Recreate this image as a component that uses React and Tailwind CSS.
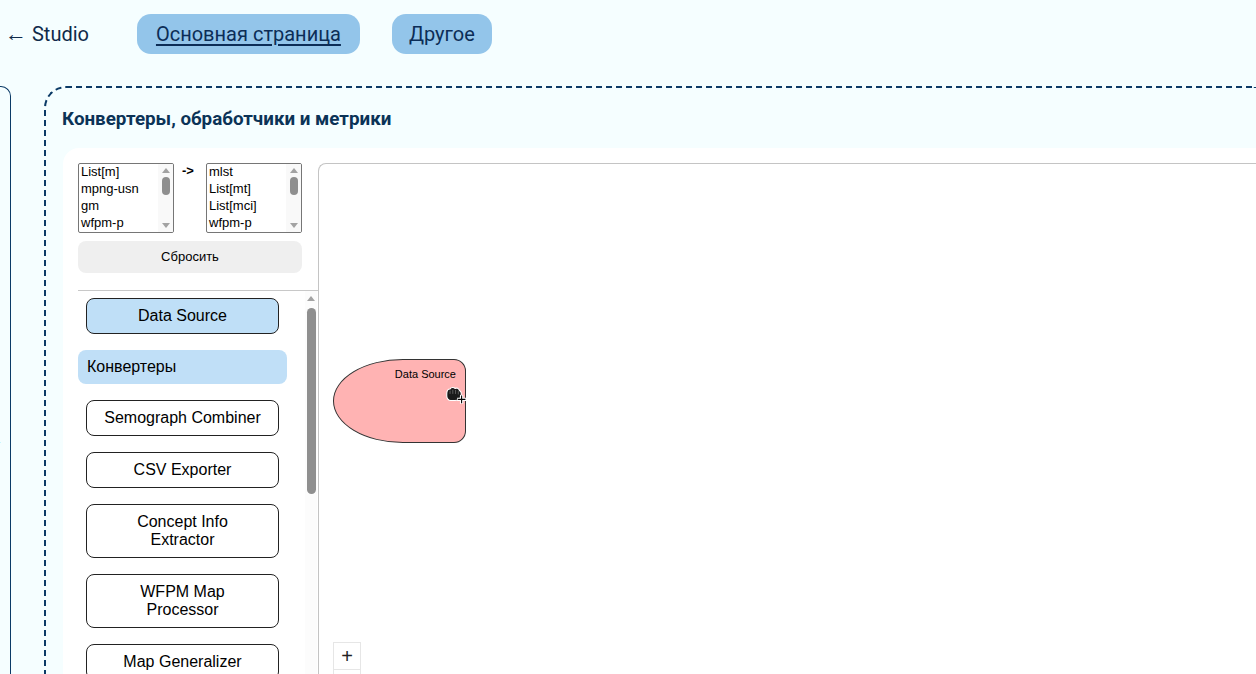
import React from 'react';

const leftItems = ['List[m]', 'mpng-usn', 'gm', 'wfpm-p'];
const rightItems = ['mlst', 'List[mt]', 'List[mci]', 'wfpm-p'];

const blocks = [
  { label: 'Semograph Combiner' },
  { label: 'CSV Exporter' },
  { label: 'Concept Info Extractor', lines: ['Concept Info', 'Extractor'] },
  { label: 'WFPM Map Processor', lines: ['WFPM Map', 'Processor'] },
  { label: 'Map Generalizer' },
];

const ListBox = ({ items }) => (
  <div className="relative w-[96px] h-[70px] border border-[#767676] rounded-[2px] bg-white overflow-hidden flex">
    <div className="flex-1 pl-[2px] -mt-[1px] text-[13px] leading-[17px] text-black">
      {items.map((it) => (
        <div key={it}>{it}</div>
      ))}
    </div>
    <div className="w-[15px] h-full bg-[#f9f9f9] flex flex-col items-center justify-between py-[4px]">
      <div className="w-0 h-0 border-l-[4px] border-r-[4px] border-b-[5px] border-l-transparent border-r-transparent border-b-[#a3a3a3]" />
      <div className="w-[8px] h-[18px] rounded-full bg-[#8f8f8f] -mt-[8px]" />
      <div className="w-0 h-0 border-l-[4px] border-r-[4px] border-t-[5px] border-l-transparent border-r-transparent border-t-[#a3a3a3] mt-[16px]" />
    </div>
  </div>
);

const HandCursor = () => (
  <svg width="22" height="20" viewBox="0 0 20 18" className="absolute left-[110px] top-[25px]">
    <path d="M2.5 8 C2.5 5 4 3.5 5.5 3.5 C6.5 2 9 1.8 10 3 C11.5 2.3 13.5 3 14 4.8 C15.5 5.5 16 7.5 15.5 9.5 C15 12.5 13 14 10 14 L6 14 C4 14 2.5 12 2.5 10 Z" fill="#1a1a1a" stroke="#fff" strokeWidth="1" />
    <path d="M5.5 5 L5.5 8 M8 4.2 L8 8 M10.5 4.5 L10.5 8 M13 5.5 L13 8.5" stroke="#666" strokeWidth="0.8" />
    <path d="M16 9 L16 17 M12 13 L20 13" stroke="#fff" strokeWidth="3" />
    <path d="M16 9.5 L16 16.5 M12.5 13 L19.5 13" stroke="#000" strokeWidth="1" />
  </svg>
);

export default function App() {
  return (
    <div className="w-[1256px] h-[674px] overflow-hidden bg-[#f5feff] font-['Roboto',sans-serif] text-[#0f2a4a]">
      {/* Top nav */}
      <div className="h-[68px] flex items-center pl-[5px]">
        <span className="text-[20px] leading-none">
          <span className="text-[22px]">←</span> Studio
        </span>
        <a className="ml-[48px] h-[40px] px-[19px] flex items-center rounded-[14px] bg-[#93c5ea] text-[20px] underline underline-offset-[3px] text-[#0c2d57]">
          Основная страница
        </a>
        <a className="ml-[32px] h-[40px] px-[17px] flex items-center rounded-[14px] bg-[#93c5ea] text-[20px] text-[#0c2d57]">
          Другое
        </a>
      </div>

      <div className="flex mt-[18px]">
        {/* Collapsed left panel */}
        <div className="relative w-[12px] h-[620px] border-t border-r border-[#0b3a66] rounded-tr-[10px] -ml-[1px]">
          <span className="absolute -left-[4px] top-[348px] text-[10px] text-[#0b3a66]">&gt;</span>
        </div>

        {/* Dashed section */}
        <div className="ml-[33px] flex-1 h-[620px] border-t-2 border-l-2 border-dashed border-[#0b3a66] rounded-tl-[22px] pt-[19px]">
          <h2 className="pl-[16px] text-[18.8px] leading-[24px] font-bold text-[#0b3357]">
            Конвертеры, обработчики и метрики
          </h2>

          <div className="mt-[17px] ml-[17px] bg-white rounded-tl-[16px] flex h-[540px] font-['Liberation_Sans',Arial,sans-serif] text-black">
            {/* Sidebar */}
            <div className="w-[255px] flex flex-col pt-[15px]">
              <div className="pl-[15px] flex items-start">
                <ListBox items={leftItems} />
                <span className="ml-[8px] mt-[1px] w-[24px] text-[13px] font-bold leading-[14px]">-&gt;</span>
                <ListBox items={rightItems} />
              </div>
              <div className="ml-[15px] mr-[16px] mt-[8px] h-[32px] rounded-[8px] bg-[#efefef] flex items-center justify-center text-[13px]">
                Сбросить
              </div>
              <div className="ml-[15px] mt-[17px] border-t border-[#c8c8c8]" />

              <div className="flex flex-1 overflow-hidden">
                <div className="w-[242px] pl-[15px] pt-[7px] flex flex-col gap-[16px]">
                  <div className="ml-[8px] w-[193px] h-[36px] rounded-[8px] border border-[#222] bg-[#bfdff7] flex items-center justify-center text-[16px]">
                    Data Source
                  </div>
                  <div className="w-[209px] h-[34px] rounded-[8px] bg-[#c0dff7] flex items-center pl-[9px] text-[16px]">
                    Конвертеры
                  </div>
                  {blocks.map((b) => (
                    <div
                      key={b.label}
                      className={`ml-[8px] w-[193px] ${b.lines ? 'h-[54px]' : 'h-[36px]'} shrink-0 rounded-[8px] border border-[#222] bg-white flex flex-col items-center justify-center text-[16px] leading-[18px]`}
                    >
                      {b.lines ? b.lines.map((l) => <span key={l}>{l}</span>) : b.label}
                    </div>
                  ))}
                </div>
                {/* scrollbar */}
                <div className="w-[12px] flex flex-col items-center pt-[5px] bg-[#fcfcfc]">
                  <div className="w-0 h-0 border-l-[4px] border-r-[4px] border-b-[5px] border-l-transparent border-r-transparent border-b-[#a3a3a3]" />
                  <div className="mt-[7px] w-[9px] h-[186px] rounded-full bg-[#8f8f8f]" />
                </div>
              </div>
            </div>

            {/* Canvas */}
            <div className="relative mt-[15px] flex-1 border-t border-l border-[#c4c4c4] rounded-tl-[8px] bg-white">
              <div className="absolute left-[14px] top-[195px] w-[133px] h-[84px] bg-[#ffb3b3] border border-[#333] rounded-[70px_12px_12px_70px/42px_12px_12px_42px]">
                <span className="absolute right-[9px] top-[8px] text-[11px] leading-[13px]">Data Source</span>
                <HandCursor />
              </div>
              <div className="absolute left-[14px] top-[478px] w-[28px] flex flex-col">
                <div className="h-[28px] border border-[#e6e6e6] bg-white flex items-center justify-center text-[20px] leading-none text-[#222]">
                  +
                </div>
                <div className="h-[28px] border border-t-0 border-[#e6e6e6] bg-white" />
              </div>
            </div>
          </div>
        </div>
      </div>
    </div>
  );
}
